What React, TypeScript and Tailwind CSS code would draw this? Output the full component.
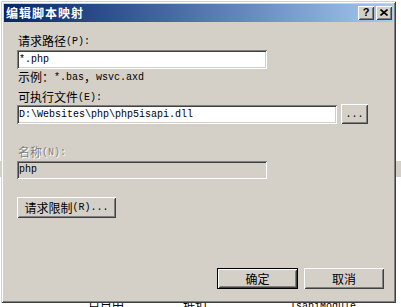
const ASCII = /([\x00-\x7f]+)/;

function Txt({ s }: { s: string }) {
  return (
    <>
      {s
        .split(ASCII)
        .filter(Boolean)
        .map((p, i) =>
          ASCII.test(p) ? (
            <span key={i} className="font-['Liberation_Mono',monospace] text-[10px]">
              {p}
            </span>
          ) : (
            <span key={i}>{p}</span>
          )
        )}
    </>
  );
}

const raised =
  'shadow-[inset_1px_1px_0_#ffffff,inset_-1px_-1px_0_#404040,inset_2px_2px_0_#d4d0c8,inset_-2px_-2px_0_#808080]';
const sunken =
  'shadow-[inset_1px_1px_0_#808080,inset_-1px_-1px_0_#ffffff,inset_2px_2px_0_#404040,inset_-2px_-2px_0_#d4d0c8]';

function Label({ s, className = '' }: { s: string; className?: string }) {
  return (
    <div className={`h-[14px] flex items-center pl-[1px] whitespace-nowrap ${className}`}>
      <Txt s={s} />
    </div>
  );
}

function Field({ value, width, disabled }: { value: string; width: string; disabled?: boolean }) {
  return (
    <div
      className={`${width} ${sunken} ${
        disabled ? 'bg-[#d4d0c8] h-[18px]' : 'bg-white h-[19px]'
      } flex items-center pl-[2px] text-black leading-[12px] whitespace-nowrap`}
    >
      <Txt s={value} />
    </div>
  );
}

export default function App() {
  return (
    <div className="relative w-[401px] h-[307px] overflow-hidden bg-white font-['Noto_Sans_CJK_SC',sans-serif] text-[12px] text-black">
      {/* window behind the dialog */}
      <div className="flex flex-col">
        <div className="h-[161px]" />
        <div className="h-[16px] bg-[#d4d0c8]" />
        <div className="h-[122px]" />
        <div className="flex h-[14px] items-center text-[12px] whitespace-nowrap">
          <span className="ml-[88px]">户目田</span>
          <span className="ml-[59px]">抵扣</span>
          <span className="ml-[83px] font-['Liberation_Mono',monospace] text-[10px]">IsapiModule</span>
        </div>
      </div>

      {/* dialog */}
      <div className="absolute left-[1px] top-[1px] w-[395px] h-[302px] bg-[#d4d0c8] p-[3px] shadow-[inset_1px_1px_0_#d4d0c8,inset_-1px_-1px_0_#404040,inset_2px_2px_0_#ffffff,inset_-2px_-2px_0_#808080]">
        <div className="h-[18px] flex items-center justify-between bg-gradient-to-r from-[#0a246a] to-[#a6caf0] pl-[2px] pr-[1px]">
          <span className="text-white font-bold text-[12px] tracking-[1px] leading-[14px]">编辑脚本映射</span>
          <div className="flex gap-[2px]">
            <div className={`w-[16px] h-[14px] bg-[#d4d0c8] ${raised} flex items-center justify-center`}>
              <span className="font-['Liberation_Sans',sans-serif] font-bold text-[11px] leading-[11px] mt-[-1px]">?</span>
            </div>
            <div className={`w-[16px] h-[14px] bg-[#d4d0c8] ${raised} flex items-center justify-center`}>
              <svg width="8" height="7" viewBox="0 0 8 7" className="mt-[-1px]">
                <path d="M0.5 0.5 L7.5 6.5 M7.5 0.5 L0.5 6.5" stroke="#000" strokeWidth="1.6" />
              </svg>
            </div>
          </div>
        </div>

        <div className="flex flex-col pl-[13px]">
          <Label s="请求路径(P):" className="mt-[12px]" />
          <div className="mt-[2px]">
            <Field value="*.php" width="w-[250px]" />
          </div>
          <Label s="示例：*.bas，wsvc.axd" className="mt-[1px]" />
          <Label s="可执行文件(E):" className="mt-[6px]" />
          <div className="flex items-start gap-[4px] h-[20px]">
            <div className="mt-[1px]">
              <Field value="D:\Websites\php\php5isapi.dll" width="w-[320px]" />
            </div>
            <div className={`w-[27px] h-[20px] ${raised} flex items-center justify-center`}>
              <span className="font-['Liberation_Mono',monospace] text-[10px] leading-[10px] mt-[2px]">...</span>
            </div>
          </div>
          <Label s="名称(N):" className="mt-[21px] text-[#808080] [text-shadow:1px_1px_0_#ffffff]" />
          <div className="mt-[2px]">
            <Field value="php" width="w-[250px]" disabled />
          </div>
          <div className={`mt-[18px] w-[99px] h-[21px] ${raised} flex items-center justify-center whitespace-nowrap`}>
            <Txt s="请求限制(R)..." />
          </div>
          <div className="mt-[50px] flex pl-[200px] gap-[6px]">
            <div className="w-[81px] h-[21px] border border-black">
              <div className={`w-full h-full ${raised} flex items-center justify-center`}>确定</div>
            </div>
            <div className={`w-[80px] h-[21px] ${raised} flex items-center justify-center`}>取消</div>
          </div>
        </div>
      </div>
    </div>
  );
}
